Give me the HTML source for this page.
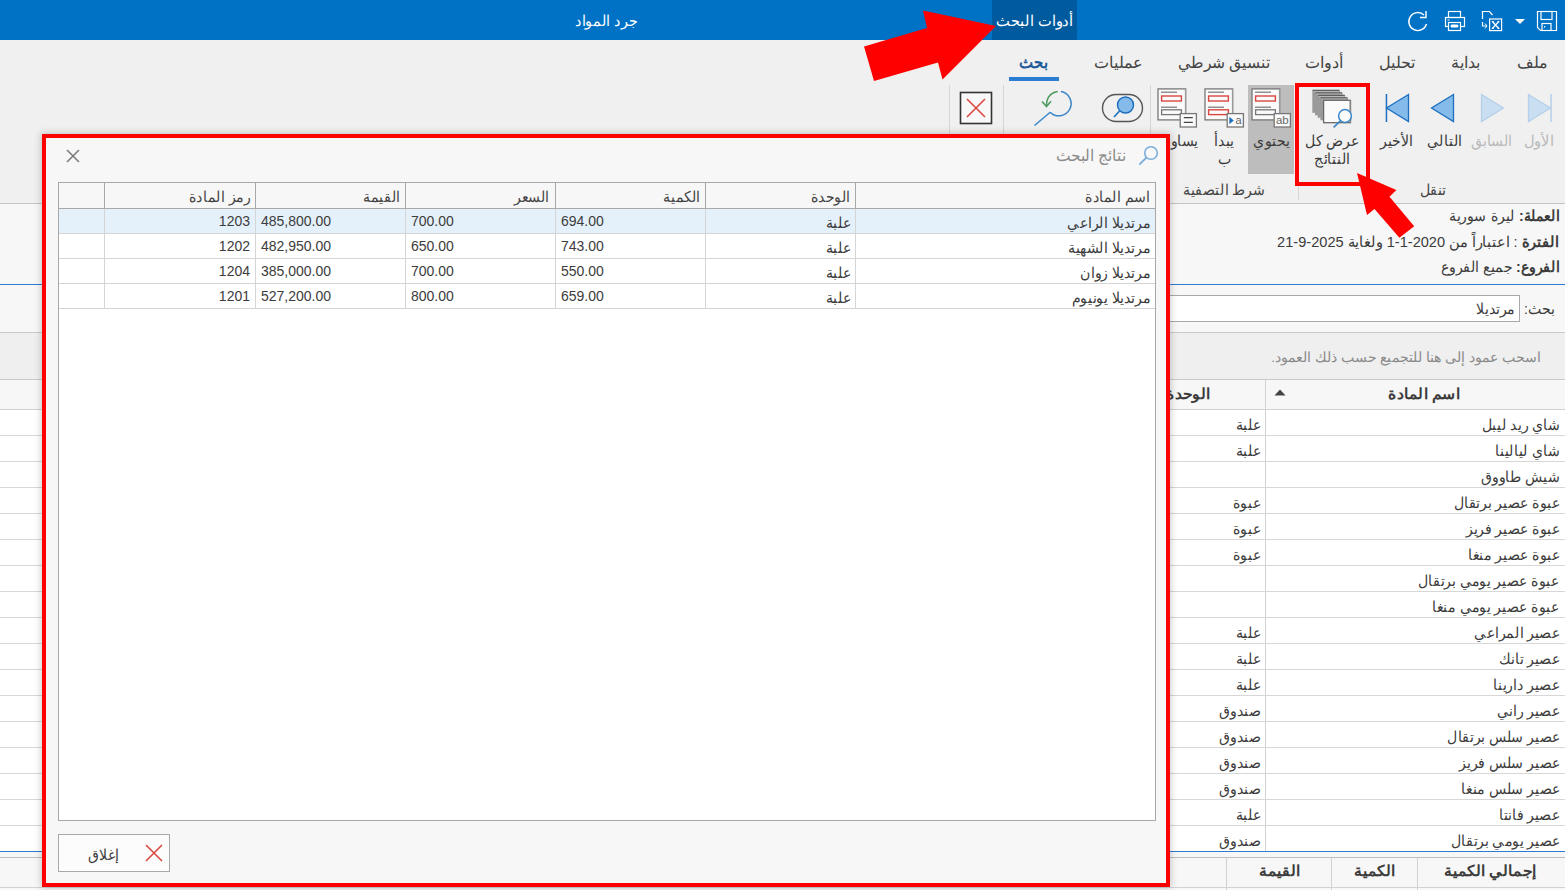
<!DOCTYPE html>
<html lang="ar">
<head>
<meta charset="utf-8">
<style>
*{margin:0;padding:0;box-sizing:border-box}
html,body{width:1565px;height:890px;overflow:hidden;background:#f7f7f7;font-family:"Liberation Sans",sans-serif;color:#333}
.a{position:absolute}
.t{position:absolute;white-space:nowrap;line-height:1}
svg.a{overflow:visible}
</style>
</head>
<body>
<div class="a" style="left:0px;top:0px;width:1565px;height:40px;background:#0072c6;"></div>
<div class="a" style="left:992px;top:0px;width:85px;height:40px;background:#005a9e;"></div>
<div class="t" style="top:13px;font-size:15px;color:#fff;right:492px;direction:rtl;transform:scaleX(0.975);transform-origin:right center;">أدوات البحث</div>
<div class="t" style="top:13px;font-size:15px;color:#fff;right:928px;direction:rtl;transform:scaleX(0.955);transform-origin:right center;">جرد المواد</div>
<svg class="a" style="left:1536px;top:10px;" width="22" height="22" viewBox="0 0 22 22"><path d="M1.5 1.5h19v19h-16l-3-3z" fill="none" stroke="#fff" stroke-width="1.2"/><rect x="5" y="1.5" width="11" height="8" fill="none" stroke="#fff" stroke-width="1.2"/><rect x="6" y="13.5" width="9" height="7" fill="none" stroke="#fff" stroke-width="1.2"/><rect x="8" y="16" width="1.2" height="1.5" fill="#fff"/></svg>
<svg class="a" style="left:1514px;top:18px;" width="12" height="7" viewBox="0 0 12 7"><path d="M1 1h10l-5 5z" fill="#fff"/></svg>
<svg class="a" style="left:1481px;top:10px;" width="22" height="22" viewBox="0 0 22 22"><path d="M1.5 9V1.5h7l3 3.5" fill="none" stroke="#fff" stroke-width="1.2"/><path d="M1.5 12v4h4" fill="none" stroke="#fff" stroke-width="1.2"/><path d="M4 13.5l2 2.5-2 2.5" fill="none" stroke="#fff" stroke-width="1"/><rect x="8.6" y="9" width="12" height="11.6" fill="none" stroke="#fff" stroke-width="1.2"/><path d="M11.3 11.5l6.5 7M17.8 11.5l-6.5 7" stroke="#fff" stroke-width="1.3"/><path d="M10.8 11.5h2M16.5 11.5h2M10.8 18.5h2M16.5 18.5h2" stroke="#fff" stroke-width="0.9"/></svg>
<svg class="a" style="left:1444px;top:10px;" width="22" height="22" viewBox="0 0 22 22"><rect x="4.5" y="1.5" width="12" height="6" fill="none" stroke="#fff" stroke-width="1.2"/><rect x="1.5" y="7.5" width="19" height="9" fill="none" stroke="#fff" stroke-width="1.2"/><rect x="4.5" y="12.5" width="12" height="8" fill="#0072c6" stroke="#fff" stroke-width="1.2"/><rect x="6.5" y="14.5" width="8" height="3" rx="1.5" fill="#fff"/><rect x="3.5" y="9.5" width="2" height="1" fill="#fff"/></svg>
<svg class="a" style="left:1407px;top:10px;" width="22" height="22" viewBox="0 0 22 22"><path d="M19.5 14A9 9 0 1 1 17 5" fill="none" stroke="#fff" stroke-width="1.4"/><path d="M19 1v6.5h-6" fill="none" stroke="#fff" stroke-width="1.4"/></svg>
<div class="a" style="left:0px;top:40px;width:1565px;height:163px;background:#f0f0f0;"></div>
<div class="a" style="left:0px;top:203px;width:1565px;height:1px;background:#c3c3c3;"></div>
<div class="t" style="top:55px;font-size:16px;color:#444;right:17px;direction:rtl;">ملف</div>
<div class="t" style="top:55px;font-size:16px;color:#444;right:85px;direction:rtl;">بداية</div>
<div class="t" style="top:55px;font-size:16px;color:#444;right:150px;direction:rtl;">تحليل</div>
<div class="t" style="top:55px;font-size:16px;color:#444;right:222px;direction:rtl;">أدوات</div>
<div class="t" style="top:55px;font-size:16px;color:#444;right:296px;direction:rtl;transform:scaleX(0.975);transform-origin:right center;">تنسيق شرطي</div>
<div class="t" style="top:55px;font-size:16px;color:#444;right:422px;direction:rtl;">عمليات</div>
<div class="t" style="top:54px;font-size:17px;color:#1f5b98;font-weight:bold;right:517px;direction:rtl;transform:scaleX(0.88);transform-origin:right center;">بحث</div>
<div class="a" style="left:1009px;top:77px;width:50px;height:4px;background:#2b7cd3;"></div>
<div class="a" style="left:949px;top:85px;width:1px;height:118px;background:#d6d6d6;"></div>
<div class="a" style="left:1003px;top:85px;width:1px;height:118px;background:#d6d6d6;"></div>
<div class="a" style="left:1150px;top:85px;width:1px;height:118px;background:#d6d6d6;"></div>
<div class="a" style="left:1298px;top:186px;width:1px;height:14px;background:#d6d6d6;"></div>
<div class="t" style="top:182px;font-size:15px;color:#444;right:119px;direction:rtl;transform:scaleX(0.94);transform-origin:right center;">تنقل</div>
<div class="t" style="top:182px;font-size:15px;color:#444;right:300px;direction:rtl;transform:scaleX(0.94);transform-origin:right center;">شرط التصفية</div>
<svg class="a" style="left:1526px;top:92px;" width="28" height="32" viewBox="0 0 28 32"><path d="M2.5 2.5L24.5 16L2.5 29.5z" fill="#c9def1" stroke="#b5d0ea" stroke-width="1.3"/><rect x="24.3" y="2" width="1.5" height="28" fill="#b5d0ea"/></svg>
<svg class="a" style="left:1479px;top:92px;" width="28" height="32" viewBox="0 0 28 32"><path d="M2.5 2.5L24.5 16L2.5 29.5z" fill="#c9def1" stroke="#b5d0ea" stroke-width="1.3"/></svg>
<svg class="a" style="left:1428px;top:92px;" width="28" height="32" viewBox="0 0 28 32"><path d="M25.5 2.5L3.5 16L25.5 29.5z" fill="#84bbea" stroke="#1f6fbf" stroke-width="1.3"/></svg>
<svg class="a" style="left:1384px;top:92px;" width="28" height="32" viewBox="0 0 28 32"><path d="M24.5 2.5L2.5 16L24.5 29.5z" fill="#84bbea" stroke="#1f6fbf" stroke-width="1.3"/><rect x="1.7" y="2" width="1.5" height="28" fill="#1f6fbf"/></svg>
<div class="t" style="top:133px;font-size:15px;color:#b9b9b9;right:11px;direction:rtl;transform:scaleX(0.98);transform-origin:right center;">الأول</div>
<div class="t" style="top:133px;font-size:15px;color:#b9b9b9;right:53px;direction:rtl;transform:scaleX(0.94);transform-origin:right center;">السابق</div>
<div class="t" style="top:133px;font-size:15px;color:#3c3c3c;right:103px;direction:rtl;transform:scaleX(0.94);transform-origin:right center;">التالي</div>
<div class="t" style="top:133px;font-size:15px;color:#3c3c3c;right:152px;direction:rtl;transform:scaleX(0.94);transform-origin:right center;">الأخير</div>
<svg class="a" style="left:1312px;top:89px;" width="42" height="40" viewBox="0 0 42 40"><rect x="0.30" y="0.80" width="27.5" height="23" fill="#9a9a9a"/><path d="M0.80 1.40h26.5" stroke="#5e5e5e" stroke-width="1.2"/><path d="M1.50 2.60h25.5" stroke="#c4c4c4" stroke-width="0.8"/><rect x="3.00" y="3.30" width="27.5" height="23" fill="#9a9a9a"/><path d="M3.50 3.90h26.5" stroke="#5e5e5e" stroke-width="1.2"/><path d="M4.20 5.10h25.5" stroke="#c4c4c4" stroke-width="0.8"/><rect x="5.70" y="5.80" width="27.5" height="23" fill="#9a9a9a"/><path d="M6.20 6.40h26.5" stroke="#5e5e5e" stroke-width="1.2"/><path d="M6.90 7.60h25.5" stroke="#c4c4c4" stroke-width="0.8"/><rect x="8.40" y="8.30" width="27.5" height="23" fill="#9a9a9a"/><path d="M8.90 8.90h26.5" stroke="#5e5e5e" stroke-width="1.2"/><path d="M9.60 10.10h25.5" stroke="#c4c4c4" stroke-width="0.8"/><rect x="11.6" y="11.3" width="26.8" height="22.4" fill="#fafafa" stroke="#6a6a6a" stroke-width="1.3"/><path d="M38.4 11.3v22.4" stroke="#8a8a8a" stroke-width="1.6"/><circle cx="33" cy="27" r="6.4" fill="#fafafa" stroke="#3a86c8" stroke-width="1.5"/><path d="M28.6 31.6L21.6 38.4" stroke="#3a86c8" stroke-width="1.6"/></svg>
<div class="t" style="top:133px;font-size:15px;color:#3c3c3c;right:206px;direction:rtl;transform:scaleX(0.94);transform-origin:right center;">عرض كل</div>
<div class="t" style="top:151px;font-size:15px;color:#3c3c3c;right:215px;direction:rtl;transform:scaleX(0.94);transform-origin:right center;">النتائج</div>
<div class="a" style="left:1248px;top:85px;width:46px;height:89px;background:#bdbdbd;"></div>
<svg class="a" style="left:1251px;top:88px;" width="46" height="44" viewBox="0 0 46 44"><rect x="1" y="0.9" width="27.6" height="31" fill="#fafafa" stroke="#777" stroke-width="1.3"/><path d="M28.6 0.9v31" stroke="#9a9a9a" stroke-width="1.3"/><path d="M4 4.2h16" stroke="#777" stroke-width="1.2"/><rect x="4.6" y="8" width="19.8" height="5" fill="none" stroke="#d9473f" stroke-width="1.4"/><path d="M4 19.2h16" stroke="#777" stroke-width="1.2"/><rect x="4.6" y="21.8" width="19.8" height="4.8" fill="none" stroke="#777" stroke-width="1.3"/><rect x="23.2" y="25.6" width="16.2" height="13.4" fill="#fafafa" stroke="#777" stroke-width="1.3"/><text x="31.3" y="36" font-size="11.5" font-family="Liberation Sans" fill="#666" text-anchor="middle">ab</text></svg>
<svg class="a" style="left:1204px;top:88px;" width="46" height="44" viewBox="0 0 46 44"><rect x="1" y="0.9" width="27.6" height="31" fill="#fafafa" stroke="#777" stroke-width="1.3"/><path d="M28.6 0.9v31" stroke="#9a9a9a" stroke-width="1.3"/><path d="M4 4.2h16" stroke="#777" stroke-width="1.2"/><rect x="4.6" y="8" width="19.8" height="5" fill="none" stroke="#d9473f" stroke-width="1.4"/><path d="M4 19.2h16" stroke="#777" stroke-width="1.2"/><rect x="4.6" y="21.8" width="19.8" height="4.8" fill="none" stroke="#d9473f" stroke-width="1.4"/><rect x="23.2" y="25.6" width="16.2" height="13.4" fill="#fafafa" stroke="#777" stroke-width="1.3"/><path d="M25.3 28.8l4.5 3.7-4.5 3.7z" fill="#1f6fbf"/><text x="34.6" y="36" font-size="11" font-family="Liberation Sans" fill="#666" text-anchor="middle">a</text></svg>
<svg class="a" style="left:1157px;top:88px;" width="46" height="44" viewBox="0 0 46 44"><rect x="1" y="0.9" width="27.6" height="31" fill="#fafafa" stroke="#777" stroke-width="1.3"/><path d="M28.6 0.9v31" stroke="#9a9a9a" stroke-width="1.3"/><path d="M4 4.2h16" stroke="#777" stroke-width="1.2"/><rect x="4.6" y="8" width="19.8" height="5" fill="none" stroke="#d9473f" stroke-width="1.4"/><path d="M4 19.2h16" stroke="#777" stroke-width="1.2"/><rect x="4.6" y="21.8" width="19.8" height="4.8" fill="none" stroke="#777" stroke-width="1.3"/><rect x="23.2" y="25.6" width="16.2" height="13.4" fill="#fafafa" stroke="#777" stroke-width="1.3"/><path d="M26.8 29.6h9M26.8 34.4h9" stroke="#444" stroke-width="1.3"/></svg>
<div class="t" style="top:133px;font-size:15px;color:#3c3c3c;right:275px;direction:rtl;transform:scaleX(0.94);transform-origin:right center;">يحتوي</div>
<div class="t" style="top:133px;font-size:15px;color:#3c3c3c;right:331px;direction:rtl;transform:scaleX(0.94);transform-origin:right center;">يبدأ</div>
<div class="t" style="top:151px;font-size:15px;color:#3c3c3c;right:334px;direction:rtl;transform:scaleX(0.94);transform-origin:right center;">ب</div>
<div class="t" style="top:133px;font-size:15px;color:#3c3c3c;right:367px;direction:rtl;transform:scaleX(0.94);transform-origin:right center;">يساوي</div>
<svg class="a" style="left:1101px;top:92px;" width="44" height="32" viewBox="0 0 44 32"><rect x="1.5" y="2.5" width="40" height="27" rx="13.5" fill="none" stroke="#555" stroke-width="1.4"/><circle cx="24.5" cy="13" r="8" fill="#84bbea" stroke="#1f6fbf" stroke-width="1.5"/><path d="M18.5 19L13 25" stroke="#1f6fbf" stroke-width="1.7"/></svg>
<svg class="a" style="left:1030px;top:88px;" width="48" height="40" viewBox="0 0 48 40"><path d="M30.9 3.6A12.2 12.2 0 1 1 20.2 24.2" fill="none" stroke="#3a86c8" stroke-width="1.5"/><path d="M20.2 24.2L4.5 37.5" stroke="#3a86c8" stroke-width="1.5"/><path d="M27.7 3.45A12.2 12.2 0 0 0 16.8 13.5L16.5 17" fill="none" stroke="#4c9a5c" stroke-width="1.5"/><path d="M12 13.5l4.5 5 4.5-5.3" fill="none" stroke="#4c9a5c" stroke-width="1.5"/></svg>
<svg class="a" style="left:958px;top:90px;" width="36" height="36" viewBox="0 0 36 36"><rect x="2.5" y="2.5" width="31" height="31" fill="#f8f8f8" stroke="#333" stroke-width="1.6"/><path d="M9 9l18 18M27 9L9 27" stroke="#d9473f" stroke-width="1.6"/></svg>
<div class="a" style="left:1295px;top:83px;width:75px;height:103px;background:transparent;border:4px solid #ff0000;"></div>
<div class="a" style="left:0px;top:204px;width:1565px;height:80px;background:#f7f7f7;"></div>
<div class="t" style="top:208px;font-size:15px;color:#3c3c3c;right:6px;direction:rtl;transform:scaleX(0.94);transform-origin:right center;"><b>العملة:</b> ليرة سورية</div>
<div class="t" style="top:234px;font-size:15px;color:#3c3c3c;right:6px;direction:rtl;transform:scaleX(0.972);transform-origin:right center;"><b>الفترة</b> : اعتباراً من 2020-1-1 ولغاية 2025-9-21</div>
<div class="t" style="top:259px;font-size:15px;color:#3c3c3c;right:6px;direction:rtl;transform:scaleX(0.94);transform-origin:right center;"><b>الفروع:</b> جميع الفروع</div>
<div class="a" style="left:0px;top:284px;width:1565px;height:1px;background:#2b7cd3;"></div>
<div class="a" style="left:0px;top:285px;width:1565px;height:47px;background:#f7f7f7;"></div>
<div class="t" style="top:301px;font-size:15px;color:#3c3c3c;right:10px;direction:rtl;transform:scaleX(0.94);transform-origin:right center;">بحث:</div>
<div class="a" style="left:1100px;top:295px;width:420px;height:27px;background:#fff;border:1px solid #a9a9a9;"></div>
<div class="t" style="top:301px;font-size:15px;color:#3c3c3c;right:50px;direction:rtl;transform:scaleX(0.94);transform-origin:right center;">مرتديلا</div>
<div class="a" style="left:0px;top:332px;width:1565px;height:1px;background:#c9c9c9;"></div>
<div class="a" style="left:0px;top:333px;width:1565px;height:47px;background:#efefef;"></div>
<div class="t" style="top:351px;font-size:13.5px;color:#8a8a8a;right:24px;direction:rtl;transform:scaleX(1.01);transform-origin:right center;">اسحب عمود إلى هنا للتجميع حسب ذلك العمود.</div>
<div class="a" style="left:0px;top:379px;width:1565px;height:1px;background:#c9c9c9;"></div>
<div class="a" style="left:0px;top:380px;width:1565px;height:29px;background:#f7f7f7;"></div>
<div class="a" style="left:0px;top:409px;width:1565px;height:1px;background:#d2d2d2;"></div>
<div class="a" style="left:1265px;top:380px;width:1px;height:471px;background:#d2d2d2;"></div>
<div class="t" style="top:386px;font-size:15px;color:#3c3c3c;font-weight:bold;right:105px;direction:rtl;transform:scaleX(1.04);transform-origin:right center;">اسم المادة</div>
<div class="t" style="top:386px;font-size:15px;color:#3c3c3c;font-weight:bold;right:355px;direction:rtl;transform:scaleX(1.04);transform-origin:right center;">الوحدة</div>
<svg class="a" style="left:1274px;top:389px;" width="12" height="7" viewBox="0 0 12 7"><path d="M0.5 6.5L6 0.5L11.5 6.5z" fill="#444"/></svg>
<div class="a" style="left:0px;top:410px;width:1565px;height:441px;background:#fff;"></div>
<div class="a" style="left:1265px;top:380px;width:1px;height:471px;background:#d2d2d2;"></div>
<div class="a" style="left:0px;top:435px;width:1565px;height:1px;background:#d7d7d7;"></div>
<div class="t" style="top:417px;font-size:15px;color:#3c3c3c;right:5px;direction:rtl;transform:scaleX(0.94);transform-origin:right center;">شاي ريد ليبل</div>
<div class="t" style="top:417px;font-size:15px;color:#3c3c3c;right:304px;direction:rtl;transform:scaleX(0.94);transform-origin:right center;">علبة</div>
<div class="a" style="left:0px;top:461px;width:1565px;height:1px;background:#d7d7d7;"></div>
<div class="t" style="top:443px;font-size:15px;color:#3c3c3c;right:5px;direction:rtl;transform:scaleX(0.94);transform-origin:right center;">شاي ليالينا</div>
<div class="t" style="top:443px;font-size:15px;color:#3c3c3c;right:304px;direction:rtl;transform:scaleX(0.94);transform-origin:right center;">علبة</div>
<div class="a" style="left:0px;top:487px;width:1565px;height:1px;background:#d7d7d7;"></div>
<div class="t" style="top:469px;font-size:15px;color:#3c3c3c;right:5px;direction:rtl;transform:scaleX(0.94);transform-origin:right center;">شيش طاووق</div>
<div class="a" style="left:0px;top:513px;width:1565px;height:1px;background:#d7d7d7;"></div>
<div class="t" style="top:495px;font-size:15px;color:#3c3c3c;right:5px;direction:rtl;transform:scaleX(0.94);transform-origin:right center;">عبوة عصير برتقال</div>
<div class="t" style="top:495px;font-size:15px;color:#3c3c3c;right:304px;direction:rtl;transform:scaleX(0.94);transform-origin:right center;">عبوة</div>
<div class="a" style="left:0px;top:539px;width:1565px;height:1px;background:#d7d7d7;"></div>
<div class="t" style="top:521px;font-size:15px;color:#3c3c3c;right:5px;direction:rtl;transform:scaleX(0.94);transform-origin:right center;">عبوة عصير فريز</div>
<div class="t" style="top:521px;font-size:15px;color:#3c3c3c;right:304px;direction:rtl;transform:scaleX(0.94);transform-origin:right center;">عبوة</div>
<div class="a" style="left:0px;top:565px;width:1565px;height:1px;background:#d7d7d7;"></div>
<div class="t" style="top:547px;font-size:15px;color:#3c3c3c;right:5px;direction:rtl;transform:scaleX(0.94);transform-origin:right center;">عبوة عصير منغا</div>
<div class="t" style="top:547px;font-size:15px;color:#3c3c3c;right:304px;direction:rtl;transform:scaleX(0.94);transform-origin:right center;">عبوة</div>
<div class="a" style="left:0px;top:591px;width:1565px;height:1px;background:#d7d7d7;"></div>
<div class="t" style="top:573px;font-size:15px;color:#3c3c3c;right:5px;direction:rtl;transform:scaleX(0.94);transform-origin:right center;">عبوة عصير يومي برتقال</div>
<div class="a" style="left:0px;top:617px;width:1565px;height:1px;background:#d7d7d7;"></div>
<div class="t" style="top:599px;font-size:15px;color:#3c3c3c;right:5px;direction:rtl;transform:scaleX(0.94);transform-origin:right center;">عبوة عصير يومي منغا</div>
<div class="a" style="left:0px;top:643px;width:1565px;height:1px;background:#d7d7d7;"></div>
<div class="t" style="top:625px;font-size:15px;color:#3c3c3c;right:5px;direction:rtl;transform:scaleX(0.94);transform-origin:right center;">عصير المراعي</div>
<div class="t" style="top:625px;font-size:15px;color:#3c3c3c;right:304px;direction:rtl;transform:scaleX(0.94);transform-origin:right center;">علبة</div>
<div class="a" style="left:0px;top:669px;width:1565px;height:1px;background:#d7d7d7;"></div>
<div class="t" style="top:651px;font-size:15px;color:#3c3c3c;right:5px;direction:rtl;transform:scaleX(0.94);transform-origin:right center;">عصير تانك</div>
<div class="t" style="top:651px;font-size:15px;color:#3c3c3c;right:304px;direction:rtl;transform:scaleX(0.94);transform-origin:right center;">علبة</div>
<div class="a" style="left:0px;top:695px;width:1565px;height:1px;background:#d7d7d7;"></div>
<div class="t" style="top:677px;font-size:15px;color:#3c3c3c;right:5px;direction:rtl;transform:scaleX(0.94);transform-origin:right center;">عصير دارينا</div>
<div class="t" style="top:677px;font-size:15px;color:#3c3c3c;right:304px;direction:rtl;transform:scaleX(0.94);transform-origin:right center;">علبة</div>
<div class="a" style="left:0px;top:721px;width:1565px;height:1px;background:#d7d7d7;"></div>
<div class="t" style="top:703px;font-size:15px;color:#3c3c3c;right:5px;direction:rtl;transform:scaleX(0.94);transform-origin:right center;">عصير راني</div>
<div class="t" style="top:703px;font-size:15px;color:#3c3c3c;right:304px;direction:rtl;transform:scaleX(0.94);transform-origin:right center;">صندوق</div>
<div class="a" style="left:0px;top:747px;width:1565px;height:1px;background:#d7d7d7;"></div>
<div class="t" style="top:729px;font-size:15px;color:#3c3c3c;right:5px;direction:rtl;transform:scaleX(0.94);transform-origin:right center;">عصير سلس برتقال</div>
<div class="t" style="top:729px;font-size:15px;color:#3c3c3c;right:304px;direction:rtl;transform:scaleX(0.94);transform-origin:right center;">صندوق</div>
<div class="a" style="left:0px;top:773px;width:1565px;height:1px;background:#d7d7d7;"></div>
<div class="t" style="top:755px;font-size:15px;color:#3c3c3c;right:5px;direction:rtl;transform:scaleX(0.94);transform-origin:right center;">عصير سلس فريز</div>
<div class="t" style="top:755px;font-size:15px;color:#3c3c3c;right:304px;direction:rtl;transform:scaleX(0.94);transform-origin:right center;">صندوق</div>
<div class="a" style="left:0px;top:799px;width:1565px;height:1px;background:#d7d7d7;"></div>
<div class="t" style="top:781px;font-size:15px;color:#3c3c3c;right:5px;direction:rtl;transform:scaleX(0.94);transform-origin:right center;">عصير سلس منغا</div>
<div class="t" style="top:781px;font-size:15px;color:#3c3c3c;right:304px;direction:rtl;transform:scaleX(0.94);transform-origin:right center;">صندوق</div>
<div class="a" style="left:0px;top:825px;width:1565px;height:1px;background:#d7d7d7;"></div>
<div class="t" style="top:807px;font-size:15px;color:#3c3c3c;right:5px;direction:rtl;transform:scaleX(0.94);transform-origin:right center;">عصير فانتا</div>
<div class="t" style="top:807px;font-size:15px;color:#3c3c3c;right:304px;direction:rtl;transform:scaleX(0.94);transform-origin:right center;">علبة</div>
<div class="t" style="top:833px;font-size:15px;color:#3c3c3c;right:5px;direction:rtl;transform:scaleX(0.94);transform-origin:right center;">عصير يومي برتقال</div>
<div class="t" style="top:833px;font-size:15px;color:#3c3c3c;right:304px;direction:rtl;transform:scaleX(0.94);transform-origin:right center;">صندوق</div>
<div class="a" style="left:0px;top:851px;width:1565px;height:1px;background:#2b7cd3;"></div>
<div class="a" style="left:0px;top:852px;width:1565px;height:38px;background:#f7f7f7;"></div>
<div class="a" style="left:0px;top:857px;width:1565px;height:1px;background:#bdbdbd;"></div>
<div class="a" style="left:0px;top:887px;width:1565px;height:1px;background:#d2d2d2;"></div>
<div class="a" style="left:1226px;top:858px;width:1px;height:32px;background:#d2d2d2;"></div>
<div class="a" style="left:1331px;top:858px;width:1px;height:32px;background:#d2d2d2;"></div>
<div class="a" style="left:1417px;top:858px;width:1px;height:32px;background:#d2d2d2;"></div>
<div class="t" style="top:863px;font-size:15px;color:#3c3c3c;font-weight:bold;right:29px;direction:rtl;transform:scaleX(1.04);transform-origin:right center;">إجمالي الكمية</div>
<div class="t" style="top:863px;font-size:15px;color:#3c3c3c;font-weight:bold;right:170px;direction:rtl;transform:scaleX(1.04);transform-origin:right center;">الكمية</div>
<div class="t" style="top:863px;font-size:15px;color:#3c3c3c;font-weight:bold;right:265px;direction:rtl;transform:scaleX(1.04);transform-origin:right center;">القيمة</div>
<div class="a" style="left:42px;top:134px;width:1128px;height:753px;background:#f7f7f7;border:4px solid #ff0000;box-shadow:0 0 7px 1px rgba(0,0,0,0.2);"></div>
<svg class="a" style="left:66px;top:149px;" width="14" height="14" viewBox="0 0 14 14"><path d="M1 1l12 12M13 1L1 13" stroke="#7a7a7a" stroke-width="1.5"/></svg>
<div class="t" style="top:148px;font-size:16px;color:#8a8a8a;right:440px;direction:rtl;transform:scaleX(0.965);transform-origin:right center;">نتائج البحث</div>
<svg class="a" style="left:1137px;top:145px;" width="22" height="22" viewBox="0 0 22 22"><circle cx="14" cy="8" r="6.3" fill="none" stroke="#7aaedc" stroke-width="1.6"/><path d="M9.5 12.5L2.3 19.6" stroke="#7aaedc" stroke-width="1.8"/></svg>
<div class="a" style="left:58px;top:182px;width:1098px;height:639px;background:#fff;border:1px solid #a8a8a8;"></div>
<div class="a" style="left:59px;top:183px;width:1096px;height:25px;background:#f7f7f7;"></div>
<div class="a" style="left:59px;top:208px;width:1096px;height:1px;background:#a8a8a8;"></div>
<div class="a" style="left:59px;top:209px;width:1096px;height:24px;background:#e5f1fa;"></div>
<div class="a" style="left:59px;top:233px;width:1096px;height:1px;background:#d5d5d5;"></div>
<div class="a" style="left:59px;top:258px;width:1096px;height:1px;background:#d5d5d5;"></div>
<div class="a" style="left:59px;top:283px;width:1096px;height:1px;background:#d5d5d5;"></div>
<div class="a" style="left:59px;top:308px;width:1096px;height:1px;background:#d5d5d5;"></div>
<div class="a" style="left:104px;top:183px;width:1px;height:25px;background:#a8a8a8;"></div>
<div class="a" style="left:104px;top:209px;width:1px;height:100px;background:#d5d5d5;"></div>
<div class="a" style="left:255px;top:183px;width:1px;height:25px;background:#a8a8a8;"></div>
<div class="a" style="left:255px;top:209px;width:1px;height:100px;background:#d5d5d5;"></div>
<div class="a" style="left:405px;top:183px;width:1px;height:25px;background:#a8a8a8;"></div>
<div class="a" style="left:405px;top:209px;width:1px;height:100px;background:#d5d5d5;"></div>
<div class="a" style="left:555px;top:183px;width:1px;height:25px;background:#a8a8a8;"></div>
<div class="a" style="left:555px;top:209px;width:1px;height:100px;background:#d5d5d5;"></div>
<div class="a" style="left:705px;top:183px;width:1px;height:25px;background:#a8a8a8;"></div>
<div class="a" style="left:705px;top:209px;width:1px;height:100px;background:#d5d5d5;"></div>
<div class="a" style="left:855px;top:183px;width:1px;height:25px;background:#a8a8a8;"></div>
<div class="a" style="left:855px;top:209px;width:1px;height:100px;background:#d5d5d5;"></div>
<div class="t" style="top:189px;font-size:15px;color:#444;right:415px;direction:rtl;transform:scaleX(0.94);transform-origin:right center;">اسم المادة</div>
<div class="t" style="top:189px;font-size:15px;color:#444;right:715px;direction:rtl;transform:scaleX(0.94);transform-origin:right center;">الوحدة</div>
<div class="t" style="top:189px;font-size:15px;color:#444;right:865px;direction:rtl;transform:scaleX(0.94);transform-origin:right center;">الكمية</div>
<div class="t" style="top:189px;font-size:15px;color:#444;right:1016px;direction:rtl;transform:scaleX(0.94);transform-origin:right center;">السعر</div>
<div class="t" style="top:189px;font-size:15px;color:#444;right:1165px;direction:rtl;transform:scaleX(0.94);transform-origin:right center;">القيمة</div>
<div class="t" style="top:189px;font-size:15px;color:#444;right:1315px;direction:rtl;transform:scaleX(0.94);transform-origin:right center;">رمز المادة</div>
<div class="t" style="top:215px;font-size:15px;color:#3c3c3c;right:415px;direction:rtl;transform:scaleX(0.94);transform-origin:right center;">مرتديلا الراعي</div>
<div class="t" style="top:215px;font-size:15px;color:#3c3c3c;right:714px;direction:rtl;transform:scaleX(0.94);transform-origin:right center;">علبة</div>
<div class="t" style="top:214px;font-size:14px;color:#3c3c3c;left:561px;direction:ltr;">694.00</div>
<div class="t" style="top:214px;font-size:14px;color:#3c3c3c;left:411px;direction:ltr;">700.00</div>
<div class="t" style="top:214px;font-size:14px;color:#3c3c3c;left:261px;direction:ltr;">485,800.00</div>
<div class="t" style="top:214px;font-size:14px;color:#3c3c3c;right:1315px;direction:rtl;">1203</div>
<div class="t" style="top:240px;font-size:15px;color:#3c3c3c;right:415px;direction:rtl;transform:scaleX(0.94);transform-origin:right center;">مرتديلا الشهية</div>
<div class="t" style="top:240px;font-size:15px;color:#3c3c3c;right:714px;direction:rtl;transform:scaleX(0.94);transform-origin:right center;">علبة</div>
<div class="t" style="top:239px;font-size:14px;color:#3c3c3c;left:561px;direction:ltr;">743.00</div>
<div class="t" style="top:239px;font-size:14px;color:#3c3c3c;left:411px;direction:ltr;">650.00</div>
<div class="t" style="top:239px;font-size:14px;color:#3c3c3c;left:261px;direction:ltr;">482,950.00</div>
<div class="t" style="top:239px;font-size:14px;color:#3c3c3c;right:1315px;direction:rtl;">1202</div>
<div class="t" style="top:265px;font-size:15px;color:#3c3c3c;right:415px;direction:rtl;transform:scaleX(0.94);transform-origin:right center;">مرتديلا زوان</div>
<div class="t" style="top:265px;font-size:15px;color:#3c3c3c;right:714px;direction:rtl;transform:scaleX(0.94);transform-origin:right center;">علبة</div>
<div class="t" style="top:264px;font-size:14px;color:#3c3c3c;left:561px;direction:ltr;">550.00</div>
<div class="t" style="top:264px;font-size:14px;color:#3c3c3c;left:411px;direction:ltr;">700.00</div>
<div class="t" style="top:264px;font-size:14px;color:#3c3c3c;left:261px;direction:ltr;">385,000.00</div>
<div class="t" style="top:264px;font-size:14px;color:#3c3c3c;right:1315px;direction:rtl;">1204</div>
<div class="t" style="top:290px;font-size:15px;color:#3c3c3c;right:415px;direction:rtl;transform:scaleX(0.94);transform-origin:right center;">مرتديلا يونيوم</div>
<div class="t" style="top:290px;font-size:15px;color:#3c3c3c;right:714px;direction:rtl;transform:scaleX(0.94);transform-origin:right center;">علبة</div>
<div class="t" style="top:289px;font-size:14px;color:#3c3c3c;left:561px;direction:ltr;">659.00</div>
<div class="t" style="top:289px;font-size:14px;color:#3c3c3c;left:411px;direction:ltr;">800.00</div>
<div class="t" style="top:289px;font-size:14px;color:#3c3c3c;left:261px;direction:ltr;">527,200.00</div>
<div class="t" style="top:289px;font-size:14px;color:#3c3c3c;right:1315px;direction:rtl;">1201</div>
<div class="a" style="left:58px;top:834px;width:112px;height:38px;background:#fcfcfc;border:1px solid #a8a8a8;"></div>
<svg class="a" style="left:144px;top:843px;" width="20" height="20" viewBox="0 0 20 20"><path d="M2 2l16 16M18 2L2 18" stroke="#d9473f" stroke-width="1.6"/></svg>
<div class="t" style="top:847px;font-size:15px;color:#3c3c3c;right:1446px;direction:rtl;transform:scaleX(0.94);transform-origin:right center;">إغلاق</div>
<svg class="a" style="left:0px;top:0px;pointer-events:none" width="1565" height="890" viewBox="0 0 1565 890"><polygon points="874,81 864,46.5 927,28 923,10.5 996,26 942.5,79.5 938,62.5" fill="#ff0000"/><polygon points="1357,173 1396.4,190 1389.5,196.7 1414.2,226.2 1399.4,237.8 1374.5,209 1367,215" fill="#ff0000"/></svg>
</body>
</html>
